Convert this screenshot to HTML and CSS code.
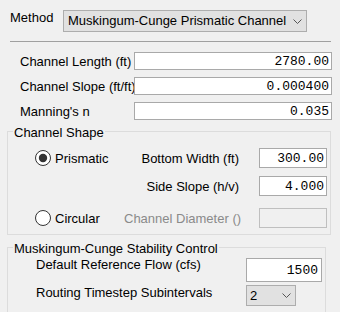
FILE: index.html
```html
<!DOCTYPE html>
<html>
<head>
<meta charset="utf-8">
<link rel="stylesheet" href="styles.css">
</head>
<body>
<div class="panel">
  <div class="method-row">
    <span class="method-label">Method</span>
    <div class="combo combo-method">
      <span class="combo-text">Muskingum-Cunge Prismatic Channel</span>
      <svg class="chev" viewBox="0 0 9 5"><polyline points="0.5,0.5 4.5,4.5 8.5,0.5" fill="none" stroke="#555" stroke-width="1"/></svg>
    </div>
  </div>
  <div class="sep"></div>
  <div class="fields">
    <div class="field"><span class="field-label">Channel Length (ft)</span><div class="input input-wide">2780.00</div></div>
    <div class="field"><span class="field-label">Channel Slope (ft/ft)</span><div class="input input-wide">0.000400</div></div>
    <div class="field"><span class="field-label">Manning's n</span><div class="input input-wide">0.035</div></div>
  </div>
  <div class="group group-shape">
    <div class="group-title">Channel Shape</div>
    <div class="shape-rows">
      <div class="shape-row">
        <label class="radio">
          <svg class="radio-icon" viewBox="0 0 16 16"><circle cx="8" cy="8" r="7.5" fill="#fff" stroke="#333" stroke-width="1"/><circle cx="8" cy="8" r="4.2" fill="#333"/></svg>
          <span>Prismatic</span>
        </label>
        <span class="shape-label">Bottom Width (ft)</span>
        <div class="input input-small">300.00</div>
      </div>
      <div class="shape-row">
        <span></span>
        <span class="shape-label">Side Slope (h/v)</span>
        <div class="input input-small">4.000</div>
      </div>
      <div class="shape-row shape-row-last">
        <label class="radio">
          <svg class="radio-icon" viewBox="0 0 16 16"><circle cx="8" cy="8" r="7.5" fill="#fff" stroke="#333" stroke-width="1"/></svg>
          <span>Circular</span>
        </label>
        <span class="shape-label disabled">Channel Diameter ()</span>
        <div class="input input-small input-disabled"></div>
      </div>
    </div>
  </div>
  <div class="group group-stab">
    <div class="group-title">Muskingum-Cunge Stability Control</div>
    <div class="stab-rows">
      <div class="stab-row">
        <span class="stab-label">Default Reference Flow (cfs)</span>
        <div class="input input-flow">1500</div>
      </div>
      <div class="stab-row stab-row-second">
        <span class="stab-label">Routing Timestep Subintervals</span>
        <div class="combo combo-small">
          <span class="combo-text">2</span>
          <svg class="chev" viewBox="0 0 9 5"><polyline points="0.5,0.5 4.5,4.5 8.5,0.5" fill="none" stroke="#555" stroke-width="1"/></svg>
        </div>
      </div>
    </div>
  </div>
</div>
</body>
</html>
```
FILE: styles.css
```css
html, body {
  margin: 0;
  padding: 0;
}
body {
  background: #f0f0f0;
  height: 312px;
  overflow: hidden;
  font-family: "Liberation Sans", Arial, sans-serif;
  font-size: 13px;
  color: #000;
}
.method-row {
  display: flex;
  align-items: flex-start;
  padding: 10px 0 0 10px;
}
.method-label {
  width: 53px;
  flex: none;
  line-height: 16px;
}
.combo {
  display: flex;
  align-items: center;
  justify-content: space-between;
  box-sizing: border-box;
  background: #e1e1e1;
  border: 1px solid #adadad;
}
.combo-method {
  width: 244px;
  height: 22px;
  padding: 0 4px 0 4px;
  line-height: 20px;
}
.combo-small {
  width: 50px;
  height: 21px;
  padding: 0 4px 0 3px;
  line-height: 19px;
}
.chev {
  width: 9px;
  height: 5px;
  flex: none;
}
.sep {
  margin: 9px 0 0 10px;
  width: 321px;
  height: 1px;
  background: #a0a0a0;
}
.fields {
  display: flex;
  flex-direction: column;
  gap: 7px;
  padding: 10px 0 0 20px;
}
.field {
  display: flex;
  align-items: center;
}
.field-label {
  width: 114px;
  flex: none;
  white-space: nowrap;
}
.input {
  box-sizing: border-box;
  background: #fff;
  border: 1px solid #a9a9a9;
  font-family: "Liberation Mono", "Courier New", monospace;
  font-size: 13px;
  text-align: right;
  padding-right: 2px;
  color: #000;
}
.input-wide {
  width: 198px;
  height: 18px;
  line-height: 17px;
}
.input-small {
  width: 68px;
  height: 20px;
  line-height: 19px;
}
.input-disabled {
  background: #f0f0f0;
  border-color: #bfbfbf;
}
.input-flow {
  width: 76px;
  height: 24px;
  line-height: 23px;
  padding-right: 3px;
  margin-top: 1px;
}
.group {
  box-sizing: border-box;
  margin-left: 7px;
  border: 1px solid #dcdcdc;
}
.group-shape {
  width: 324px;
  margin-top: 11px;
}
.group-stab {
  width: 319px;
  margin-top: 12px;
}
.group-title {
  margin: -7px 0 0 5px;
  padding: 0 1px;
  width: max-content;
  background: #f0f0f0;
  line-height: 16px;
}
.shape-rows {
  padding: 7px 3px 6px 27px;
}
.shape-row {
  display: grid;
  grid-template-columns: 89px 115px 68px;
  column-gap: 0;
  align-items: center;
  height: 20px;
}
.shape-row > .input {
  margin-left: 20px;
}
.shape-row + .shape-row {
  margin-top: 8px;
}
.shape-row-last {
  margin-top: 12px !important;
}
.radio {
  display: flex;
  align-items: center;
  gap: 4px;
  white-space: nowrap;
}
.radio-icon {
  width: 16px;
  height: 16px;
  flex: none;
}
.shape-label {
  text-align: right;
  white-space: nowrap;
}
.disabled {
  color: #8a8a8a;
}
.stab-rows {
  padding: 0 0 20px 28px;
}
.stab-row {
  display: flex;
  align-items: flex-start;
}
.stab-row-second {
  margin-top: 3px;
}
.stab-label {
  width: 210px;
  flex: none;
  line-height: 16px;
  white-space: nowrap;
}
```
